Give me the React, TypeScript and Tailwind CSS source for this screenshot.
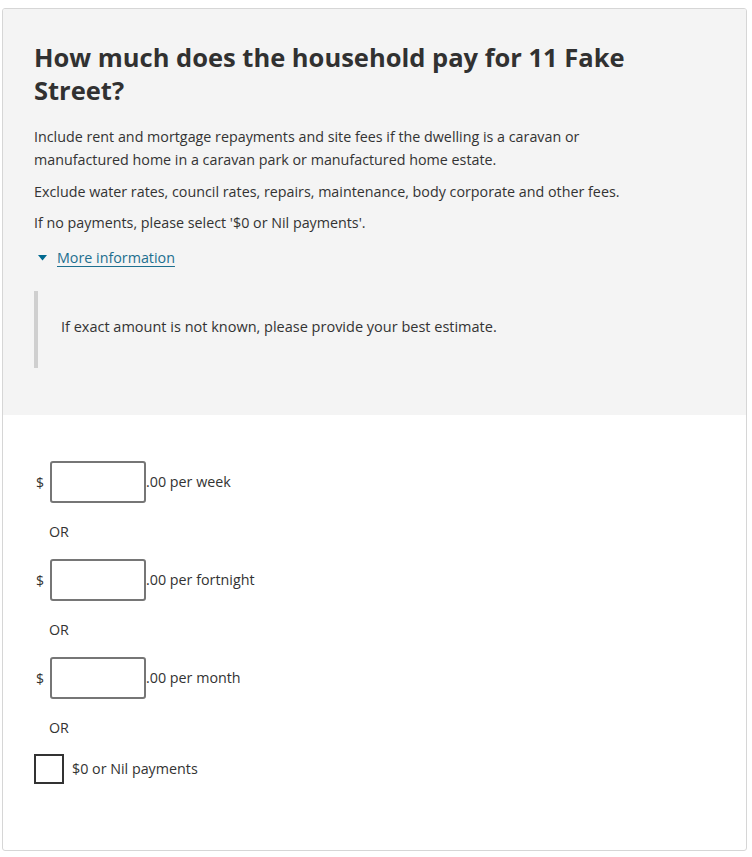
import React from "react";

function AmountRow({ label }: { label: string }) {
  return (
    <div className="flex items-center h-[42px]">
      <span className="w-[16px] pl-[2px] text-[14px] text-[#333]">$</span>
      <div className="w-[96px] h-[42px] border-2 border-[#767676] rounded-[3px] bg-white" />
      <span className="text-[14.3px] text-[#333]">.00 {label}</span>
    </div>
  );
}

function Or() {
  return <div className="pl-[15px] mt-[18px] mb-[17px] text-[14.3px] leading-[21px] text-[#333]">OR</div>;
}

export default function App() {
  return (
    <div className="w-[752px] h-[857px] bg-white pt-[8px] pl-[2px]" style={{ fontFamily: '"Open Sans", "Noto Sans", sans-serif' }}>
      <div className="w-[745px] h-[843px] border border-[#d6d6d6] rounded-[3px] overflow-hidden flex flex-col">
        <div className="bg-[#f4f4f4] h-[406px] pl-[31px] pr-[20px] pt-[32px]">
          <h1 className="text-[25.5px] leading-[33px] font-bold text-[#313131] w-[640px]">
            How much does the household pay for 11 Fake Street?
          </h1>
          <div className="mt-[18px] text-[14.3px] leading-[23px] text-[#333]">
            <p className="w-[600px]">
              Include rent and mortgage repayments and site fees if the dwelling is a caravan or manufactured home in a caravan park or manufactured home estate.
            </p>
            <p className="mt-[9px]">Exclude water rates, council rates, repairs, maintenance, body corporate and other fees.</p>
            <p className="mt-[8px]">If no payments, please select '$0 or Nil payments'.</p>
          </div>
          <div className="mt-[13px] flex items-center text-[14.3px] leading-[22px]">
            <svg width="9" height="6" viewBox="0 0 9 6" className="ml-[4px] mr-[10px]">
              <path d="M0 0 L9 0 L4.5 5.5 Z" fill="#00698f" />
            </svg>
            <span className="text-[#1d6f8f] underline underline-offset-[3px]">More information</span>
          </div>
          <div className="mt-[22px] border-l-4 border-[#cfcfcf] h-[77px] flex items-center pl-[23px] pb-[6px] text-[14.5px] text-[#333]">
            If exact amount is not known, please provide your best estimate.
          </div>
        </div>
        <div className="pl-[31px] pt-[46px]">
          <AmountRow label="per week" />
          <Or />
          <AmountRow label="per fortnight" />
          <Or />
          <AmountRow label="per month" />
          <div className="pl-[15px] mt-[18px] mb-[16px] text-[14.3px] leading-[21px] text-[#333]">OR</div>
          <div className="flex items-center">
            <div className="w-[30px] h-[30px] border-2 border-[#333] bg-white" />
            <span className="ml-[8px] text-[14.3px] text-[#333]">$0 or Nil payments</span>
          </div>
        </div>
      </div>
    </div>
  );
}
